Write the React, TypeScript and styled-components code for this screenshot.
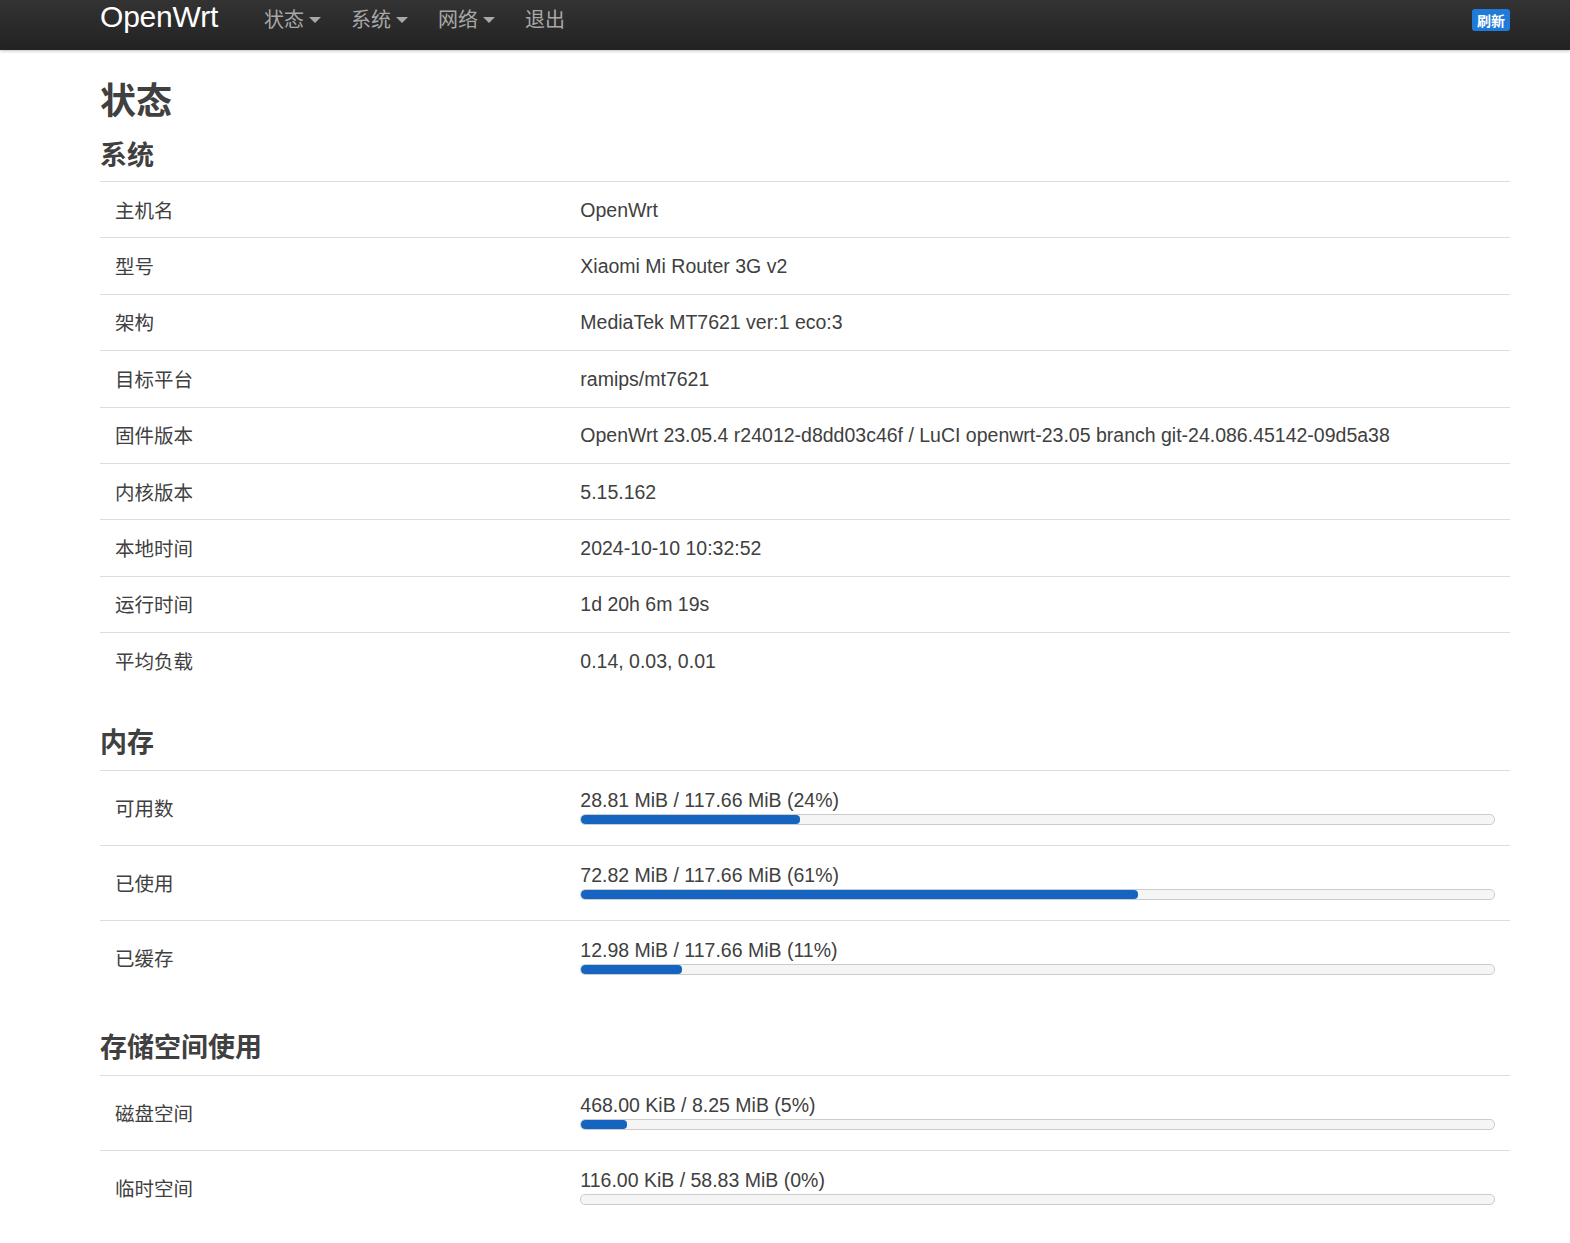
import React from "react";
import styled, { createGlobalStyle } from "styled-components";

const Global = createGlobalStyle`
  html, body { margin: 0; padding: 0; background: #fff; }
  body {
    font-family: "Liberation Sans", "Noto Sans CJK SC", Arial, sans-serif;
    color: #404040;
  }
`;

const Header = styled.header`
  height: 50px;
  background: linear-gradient(to bottom, #333 0%, #222 100%);
  box-shadow: 0 1px 3px rgba(0, 0, 0, 0.25);
`;

const HeaderInner = styled.div`
  width: 1410px;
  margin-left: 100px;
  height: 100%;
  display: flex;
  align-items: flex-start;
`;

const Brand = styled.a`
  font-family: "Liberation Sans", Arial, sans-serif;
  font-size: 30px;
  line-height: 34px;
  color: #fff;
  text-decoration: none;
  margin-right: 31px;
  letter-spacing: -0.2px;
`;

const Nav = styled.nav`
  display: flex;
  align-items: center;
  height: 38px;
  flex: 1;
`;

const NavItem = styled.a`
  display: flex;
  align-items: center;
  gap: 5px;
  padding: 0 15px;
  font-size: 20px;
  color: #a8a8a8;
  text-decoration: none;
  font-family: "Noto Sans CJK SC", sans-serif;
  line-height: 38px;
`;

const Caret = styled.span`
  width: 0;
  height: 0;
  border-left: 6px solid transparent;
  border-right: 6px solid transparent;
  border-top: 6px solid #a8a8a8;
  margin-top: 2px;
`;

const RefreshButton = styled.span`
  margin-top: 9px;
  background: #1f7ad8;
  color: #fff;
  font-weight: bold;
  font-size: 14px;
  line-height: 22px;
  height: 22px;
  padding: 0 5px;
  border-radius: 3px;
  font-family: "Noto Sans CJK SC", sans-serif;
`;

const Main = styled.main`
  width: 1410px;
  margin-left: 100px;
`;

const PageTitle = styled.h2`
  margin: 28px 0 0;
  font-size: 36px;
  line-height: 40px;
  font-weight: bold;
  font-family: "Noto Sans CJK SC", sans-serif;
  color: #404040;
`;

const SectionTitle = styled.h3<{ $top: number; $bottom: number }>`
  margin: ${(p) => p.$top}px 0 ${(p) => p.$bottom}px;
  font-size: 27px;
  line-height: 30px;
  font-weight: bold;
  font-family: "Noto Sans CJK SC", sans-serif;
  color: #404040;
`;

const Table = styled.div`
  display: flex;
  flex-direction: column;
`;

const Row = styled.div`
  display: grid;
  grid-template-columns: 33% 1fr;
  border-top: 1px solid #ddd;
  align-items: center;
`;

const LabelCell = styled.div`
  padding: 0 15px;
  font-size: 19.5px;
  line-height: 28px;
  font-family: "Noto Sans CJK SC", sans-serif;
  color: #404040;
`;

const ValueCell = styled.div<{ $progress?: boolean }>`
  padding: ${(p) => (p.$progress ? "15px 15px 20px" : "13.7px 15px")};
  font-size: 19.5px;
  line-height: 28px;
  color: #404040;
`;

const BarTrack = styled.div`
  height: 9px;
  border: 1px solid #ccc;
  border-radius: 5px;
  background: #f5f5f5;
  overflow: hidden;
`;

const BarFill = styled.div`
  height: 100%;
  background: #1565c0;
  border-radius: 4px;
`;

const systemRows: [string, string][] = [
  ["主机名", "OpenWrt"],
  ["型号", "Xiaomi Mi Router 3G v2"],
  ["架构", "MediaTek MT7621 ver:1 eco:3"],
  ["目标平台", "ramips/mt7621"],
  ["固件版本", "OpenWrt 23.05.4 r24012-d8dd03c46f / LuCI openwrt-23.05 branch git-24.086.45142-09d5a38"],
  ["内核版本", "5.15.162"],
  ["本地时间", "2024-10-10 10:32:52"],
  ["运行时间", "1d 20h 6m 19s"],
  ["平均负载", "0.14, 0.03, 0.01"],
];

const memoryRows: [string, string, number][] = [
  ["可用数", "28.81 MiB / 117.66 MiB (24%)", 24],
  ["已使用", "72.82 MiB / 117.66 MiB (61%)", 61],
  ["已缓存", "12.98 MiB / 117.66 MiB (11%)", 11],
];

const storageRows: [string, string, number][] = [
  ["磁盘空间", "468.00 KiB / 8.25 MiB (5%)", 5],
  ["临时空间", "116.00 KiB / 58.83 MiB (0%)", 0],
];

function ProgressTable({ rows }: { rows: [string, string, number][] }) {
  return (
    <Table>
      {rows.map(([label, text, pct]) => (
        <Row key={label}>
          <LabelCell>{label}</LabelCell>
          <ValueCell $progress>
            <div>{text}</div>
            <BarTrack>
              <BarFill style={{ width: `${pct}%` }} />
            </BarTrack>
          </ValueCell>
        </Row>
      ))}
    </Table>
  );
}

export default function App() {
  return (
    <>
      <Global />
      <Header>
        <HeaderInner>
          <Brand href="#">OpenWrt</Brand>
          <Nav>
            <NavItem href="#">状态<Caret /></NavItem>
            <NavItem href="#">系统<Caret /></NavItem>
            <NavItem href="#">网络<Caret /></NavItem>
            <NavItem href="#">退出</NavItem>
          </Nav>
          <RefreshButton>刷新</RefreshButton>
        </HeaderInner>
      </Header>
      <Main>
        <PageTitle>状态</PageTitle>
        <SectionTitle $top={21} $bottom={12}>系统</SectionTitle>
        <Table>
          {systemRows.map(([label, value]) => (
            <Row key={label}>
              <LabelCell>{label}</LabelCell>
              <ValueCell>{value}</ValueCell>
            </Row>
          ))}
        </Table>
        <SectionTitle $top={38} $bottom={14}>内存</SectionTitle>
        <ProgressTable rows={memoryRows} />
        <SectionTitle $top={36} $bottom={14}>存储空间使用</SectionTitle>
        <ProgressTable rows={storageRows} />
      </Main>
    </>
  );
}
